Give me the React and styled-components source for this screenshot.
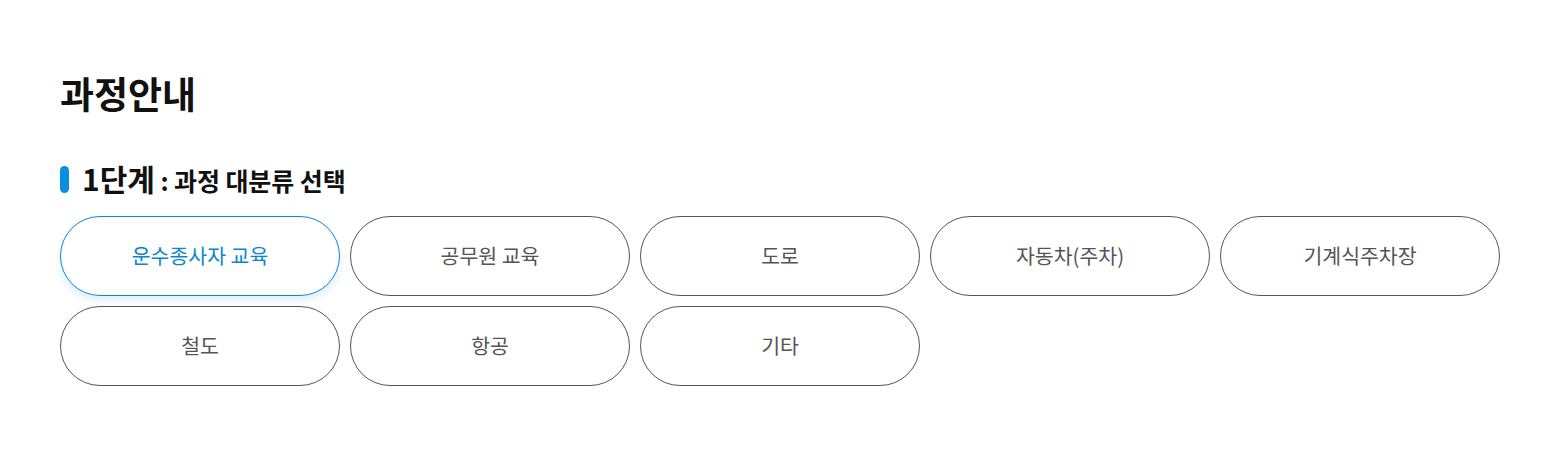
import React, { useState } from "react";
import styled, { createGlobalStyle } from "styled-components";

const Global = createGlobalStyle`
  html, body { margin: 0; padding: 0; background: #fff; }
  body { font-family: "Noto Sans CJK KR", "Noto Sans", sans-serif; color: #111; }
`;

const Page = styled.div`
  padding: 67px 60px 0 60px;
  width: 1440px;
`;

const Title = styled.h1`
  margin: 0;
  font-size: 37px;
  font-weight: 700;
  letter-spacing: 0;
  line-height: 52px;
  color: #111;
`;

const StepHeading = styled.h2`
  margin: 43px 0 0 0;
  display: flex;
  align-items: center;
  gap: 13px;
  height: 34px;
  font-weight: 700;
  color: #111;
`;

const Bar = styled.span`
  display: block;
  width: 9px;
  height: 27px;
  border-radius: 5px;
  background: #0a8fe0;
`;

const StepText = styled.span`
  line-height: 34px;
  white-space: nowrap;
`;

const StepNo = styled.span`
  font-size: 30px;
  letter-spacing: 0;
`;

const StepDesc = styled.span`
  font-size: 25px;
  letter-spacing: -0.1px;
`;

const Grid = styled.div`
  margin-top: 20px;
  display: flex;
  flex-wrap: wrap;
  gap: 10px;
`;

const Chip = styled.button`
  box-sizing: border-box;
  width: 280px;
  height: 80px;
  border-radius: 40px;
  background: #fff;
  border: 1px solid ${(p) => (p.$active ? "#0a8ad6" : "#555")};
  color: ${(p) => (p.$active ? "#0a86d0" : "#555")};
  box-shadow: ${(p) => (p.$active ? "0 4px 10px rgba(10, 138, 214, 0.14)" : "none")};
  font-family: "Noto Sans CJK KR", "Noto Sans", sans-serif;
  font-size: 20.5px;
  font-weight: 400;
  letter-spacing: 0;
  cursor: pointer;
  padding: 0 0 2px 0;
`;

const items = ["운수종사자 교육", "공무원 교육", "도로", "자동차(주차)", "기계식주차장", "철도", "항공", "기타"];

export default function App() {
  const [active, setActive] = useState(0);
  return (
    <>
      <Global />
      <Page>
        <Title>과정안내</Title>
        <StepHeading>
          <Bar />
          <StepText>
            <StepNo>1단계</StepNo>
            <StepDesc> : 과정 대분류 선택</StepDesc>
          </StepText>
        </StepHeading>
        <Grid>
          {items.map((t, i) => (
            <Chip key={t} $active={i === active} onClick={() => setActive(i)}>
              {t}
            </Chip>
          ))}
        </Grid>
      </Page>
    </>
  );
}
